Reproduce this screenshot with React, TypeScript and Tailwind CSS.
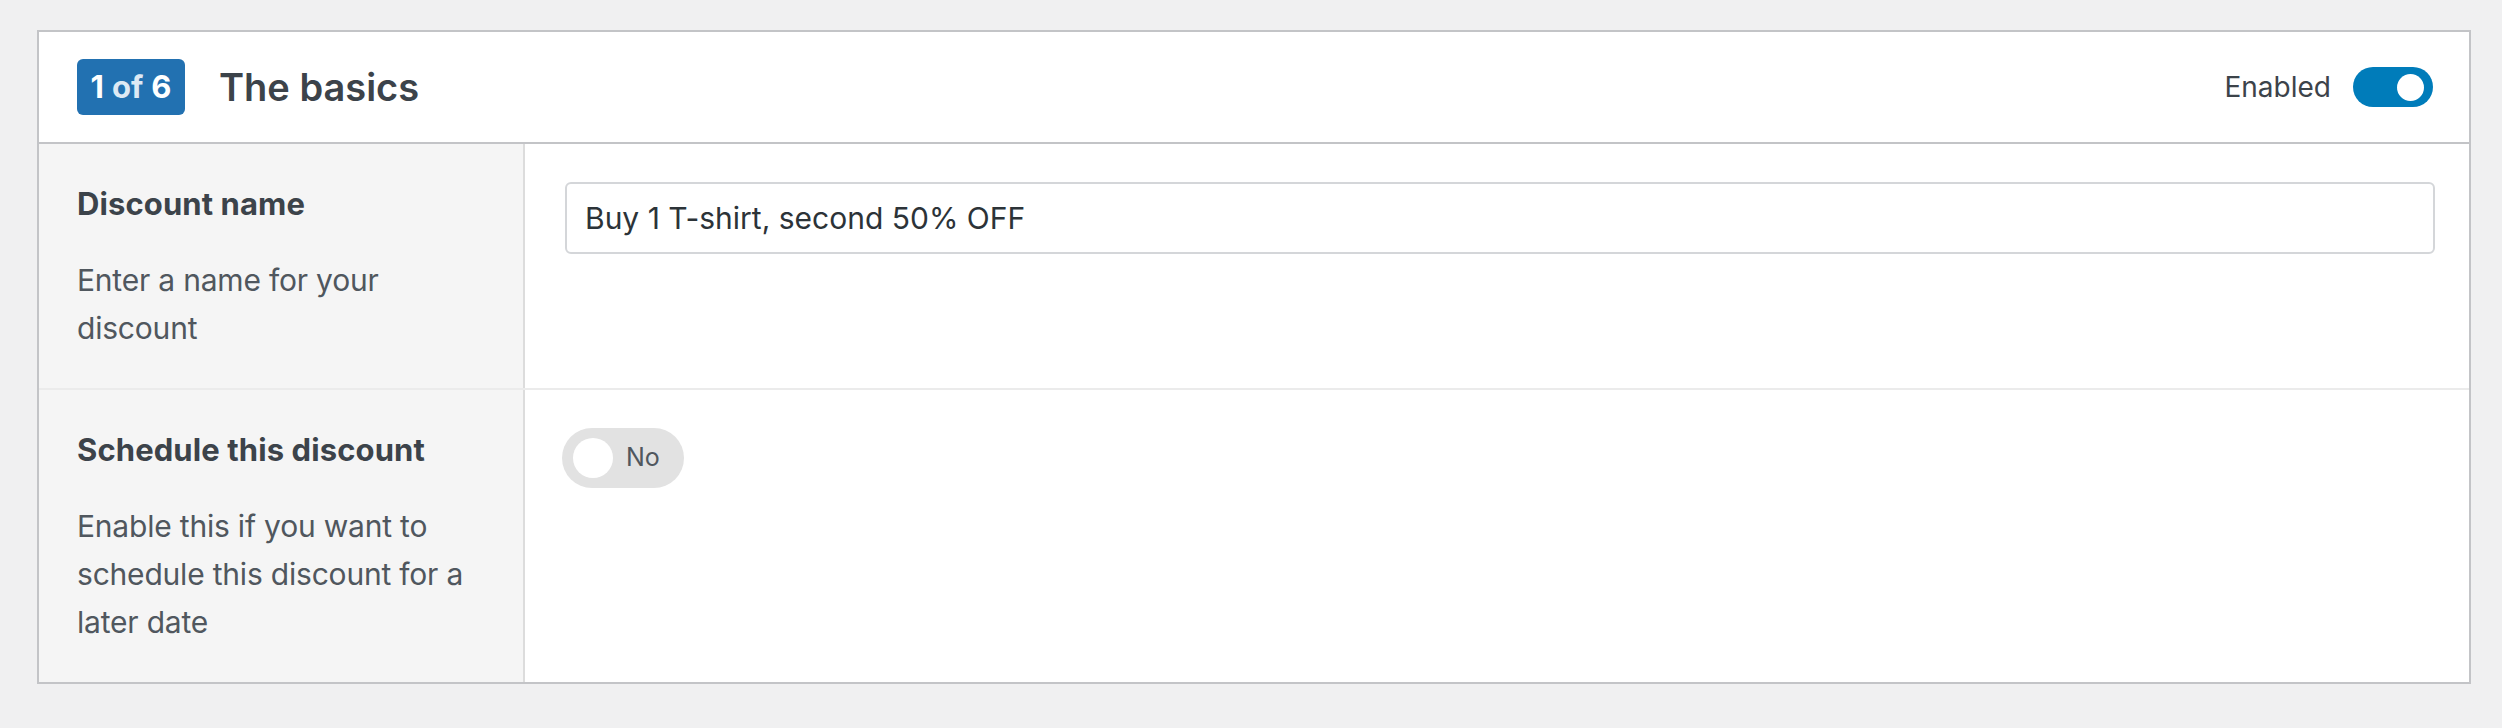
import React from "react";

const font = { fontFamily: "Inter, 'Noto Sans', sans-serif" };

function Toggle() {
  return (
    <div className="flex h-[40px] w-[80px] items-center justify-end rounded-full bg-[#007cba] pr-[9px]">
      <span className="block h-[27px] w-[27px] rounded-full bg-white" />
    </div>
  );
}

function Row({
  title,
  desc,
  children,
  last,
}: {
  title: string;
  desc: string;
  children: React.ReactNode;
  last?: boolean;
}) {
  return (
    <div className={`flex ${last ? "" : "border-b-2 border-[#ebebeb]"}`}>
      <div className="w-[486px] shrink-0 border-r-2 border-[#dcdcdc] bg-[#f5f5f5] pb-[36px] pl-[38px] pr-[28px] pt-[40px]">
        <h3 className="text-[31px] font-bold leading-[40px] tracking-[0.1px] text-[#3c434a]">{title}</h3>
        <p className="mt-[32px] text-[30px] leading-[48px] tracking-[-0.2px] text-[#50575e]">{desc}</p>
      </div>
      <div className="flex-1 pl-[37px] pr-[34px] pt-[38px]">{children}</div>
    </div>
  );
}

export default function App() {
  return (
    <div className="min-h-[728px] bg-[#f0f0f1] pl-[37px] pr-[31px] pt-[30px]" style={font}>
      <div className="border-2 border-[#c3c4c7] bg-white">
        <div className="flex h-[112px] items-center border-b-2 border-[#c3c4c7] pl-[38px] pr-[36px]">
          <span className="flex h-[56px] w-[108px] items-center justify-center rounded-[6px] bg-[#2271b1] text-[31px] font-bold text-white">
            1 <span className="mx-[8px] text-[#dde9f4]">of</span> 6
          </span>
          <h2 className="ml-[34px] text-[38px] font-semibold text-[#3c434a]">The basics</h2>
          <div className="ml-auto flex items-center gap-[22px]">
            <span className="text-[28px] text-[#3c434a]">Enabled</span>
            <Toggle />
          </div>
        </div>

        <Row title="Discount name" desc="Enter a name for your discount">
          <div className="ml-[3px] flex h-[72px] items-center rounded-[6px] border-2 border-[#d4d6d9] pl-[18px] text-[30px] text-[#2c3338]">
            Buy 1 T-shirt, second 50% OFF
          </div>
        </Row>

        <Row
          title="Schedule this discount"
          desc="Enable this if you want to schedule this discount for a later date"
          last
        >
          <div className="flex h-[60px] w-[122px] items-center rounded-full bg-[#e2e2e2] pl-[11px]">
            <span className="block h-[40px] w-[40px] rounded-full bg-white" />
            <span className="ml-[13px] text-[25px] text-[#50575e]">No</span>
          </div>
        </Row>
      </div>
    </div>
  );
}
